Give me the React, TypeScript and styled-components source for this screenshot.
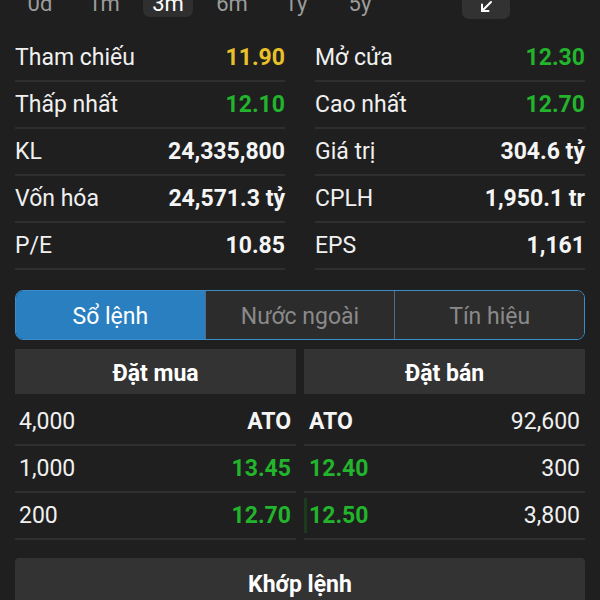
import React from 'react';
import styled, { createGlobalStyle } from 'styled-components';

const GlobalStyle = createGlobalStyle`
    html, body {
        margin: 0;
        padding: 0;
        background: #1f1f1f;
        overflow: hidden;
    }
    body {
        font-family: Roboto, 'Noto Sans', sans-serif;
        color: #f2f2f2;
    }
`;

const periods = ['0d', '1m', '3m', '6m', '1y', '5y'];

const stats = [
    { label: 'Tham chiếu', value: '11.90', tone: 'ref' },
    { label: 'Mở cửa', value: '12.30', tone: 'up' },
    { label: 'Thấp nhất', value: '12.10', tone: 'up' },
    { label: 'Cao nhất', value: '12.70', tone: 'up' },
    { label: 'KL', value: '24,335,800', tone: 'plain' },
    { label: 'Giá trị', value: '304.6 tỷ', tone: 'plain' },
    { label: 'Vốn hóa', value: '24,571.3 tỷ', tone: 'plain' },
    { label: 'CPLH', value: '1,950.1 tr', tone: 'plain' },
    { label: 'P/E', value: '10.85', tone: 'plain' },
    { label: 'EPS', value: '1,161', tone: 'plain' },
];

const orders = [
    { buyVol: '4,000', buyPrice: 'ATO', sellPrice: 'ATO', sellVol: '92,600', tone: 'plain', bar: 0 },
    { buyVol: '1,000', buyPrice: '13.45', sellPrice: '12.40', sellVol: '300', tone: 'up', bar: 0 },
    { buyVol: '200', buyPrice: '12.70', sellPrice: '12.50', sellVol: '3,800', tone: 'up', bar: 0.011 },
];

const toneColor: Record<string, string> = {
    ref: '#e9c02a',
    up: '#22b42c',
    plain: '#f5f5f5',
};

const Page = styled.div`
    padding: 0 15px;
`;

const PeriodBar = styled.div`
    display: flex;
    align-items: flex-end;
    height: 44px;
    margin-top: -25px;
`;

const Periods = styled.div`
    display: flex;
    gap: 14px;
    flex: 1;
`;

const Period = styled.div<{ $active?: boolean }>`
    width: 50px;
    height: 42px;
    display: flex;
    align-items: flex-end;
    justify-content: center;
    padding-bottom: 0;
    box-sizing: border-box;
    font-size: 22px;
    line-height: 26px;
    border-radius: 7px;
    color: ${p => (p.$active ? '#ffffff' : '#9c9c9c')};
    background: ${p => (p.$active ? '#2f2f2f' : 'transparent')};
    margin-bottom: 2px;
`;

const ExpandButton = styled.div`
    width: 48px;
    height: 44px;
    margin-right: 75px;
    border-radius: 7px;
    background: #323232;
    display: flex;
    align-items: flex-end;
    justify-content: center;
    padding-bottom: 6px;
    box-sizing: border-box;
`;

const StatGrid = styled.div`
    display: grid;
    grid-template-columns: 1fr 1fr;
    column-gap: 30px;
    margin-top: 16px;
`;

const StatRow = styled.div`
    height: 47px;
    display: flex;
    align-items: center;
    justify-content: space-between;
    border-bottom: 2px solid #2f2f2f;
    box-sizing: border-box;
    font-size: 23px;
`;

const Label = styled.span`
    color: #f0f0f0;
`;

const Value = styled.span<{ $tone: string }>`
    font-weight: 700;
    color: ${p => toneColor[p.$tone]};
`;

const Segmented = styled.div`
    display: flex;
    margin-top: 20px;
    height: 50px;
    border: 1.5px solid #3b8ccb;
    border-radius: 8px;
    overflow: hidden;
    box-sizing: border-box;
`;

const Segment = styled.div<{ $active?: boolean }>`
    flex: 1;
    display: flex;
    align-items: center;
    justify-content: center;
    padding-top: 2px;
    font-size: 23px;
    color: ${p => (p.$active ? '#ffffff' : '#8a8a8a')};
    background: ${p => (p.$active ? '#2a7fc0' : '#2c2c2c')};
    & + & {
        border-left: 1px solid #4d6c85;
    }
`;

const BookHeader = styled.div`
    display: grid;
    grid-template-columns: 1fr 1fr;
    column-gap: 8px;
    margin-top: 9px;
`;

const HeaderCell = styled.div`
    height: 45px;
    background: #333333;
    display: flex;
    align-items: center;
    justify-content: center;
    padding-top: 4px;
    box-sizing: border-box;
    font-size: 23px;
    font-weight: 700;
    color: #ffffff;
`;

const BookRows = styled.div`
    display: grid;
    grid-template-columns: 1fr 1fr;
    column-gap: 8px;
    margin-top: 5px;
`;

const BookCell = styled.div`
    position: relative;
    height: 47px;
    display: flex;
    align-items: center;
    justify-content: space-between;
    padding: 0 5px 0 4px;
    border-bottom: 2px solid #2f2f2f;
    box-sizing: border-box;
    font-size: 23px;
`;

const SellCell = styled(BookCell)`
    padding: 0 5px 0 5px;
`;

const VolumeBar = styled.div`
    position: absolute;
    left: 0;
    top: 5px;
    bottom: 5px;
    background: #1c3a1e;
`;

const Vol = styled.span`
    position: relative;
    color: #f0f0f0;
`;

const Price = styled.span<{ $tone: string }>`
    position: relative;
    font-weight: 700;
    color: ${p => toneColor[p.$tone]};
`;

const MatchBar = styled.div`
    margin-top: 18px;
    height: 50px;
    background: #333333;
    border-radius: 4px 4px 0 0;
    display: flex;
    align-items: center;
    justify-content: center;
    padding-top: 2px;
    box-sizing: border-box;
    font-size: 23px;
    font-weight: 700;
    color: #ffffff;
`;

const ArrowIcon = () => (
    <svg width="13" height="13" viewBox="0 0 13 13" fill="none" stroke="#ffffff" strokeWidth="2" strokeLinecap="round">
        <path d="M11 2 L2 11" />
        <path d="M2 4.5 V11 H8.5" />
    </svg>
);

const App = () => (
    <Page>
        <GlobalStyle />
        <PeriodBar>
            <Periods>
                {periods.map(p => (
                    <Period key={p} $active={p === '3m'}>
                        {p}
                    </Period>
                ))}
            </Periods>
            <ExpandButton>
                <ArrowIcon />
            </ExpandButton>
        </PeriodBar>
        <StatGrid>
            {stats.map(s => (
                <StatRow key={s.label}>
                    <Label>{s.label}</Label>
                    <Value $tone={s.tone}>{s.value}</Value>
                </StatRow>
            ))}
        </StatGrid>
        <Segmented>
            <Segment $active>Sổ lệnh</Segment>
            <Segment>Nước ngoài</Segment>
            <Segment>Tín hiệu</Segment>
        </Segmented>
        <BookHeader>
            <HeaderCell>Đặt mua</HeaderCell>
            <HeaderCell>Đặt bán</HeaderCell>
        </BookHeader>
        <BookRows>
            {orders.map(o => (
                <React.Fragment key={o.buyVol}>
                    <BookCell>
                        <Vol>{o.buyVol}</Vol>
                        <Price $tone={o.tone}>{o.buyPrice}</Price>
                    </BookCell>
                    <SellCell>
                        {o.bar > 0 && <VolumeBar style={{ width: `${o.bar * 100}%` }} />}
                        <Price $tone={o.tone}>{o.sellPrice}</Price>
                        <Vol>{o.sellVol}</Vol>
                    </SellCell>
                </React.Fragment>
            ))}
        </BookRows>
        <MatchBar>Khớp lệnh</MatchBar>
    </Page>
);

export default App;
